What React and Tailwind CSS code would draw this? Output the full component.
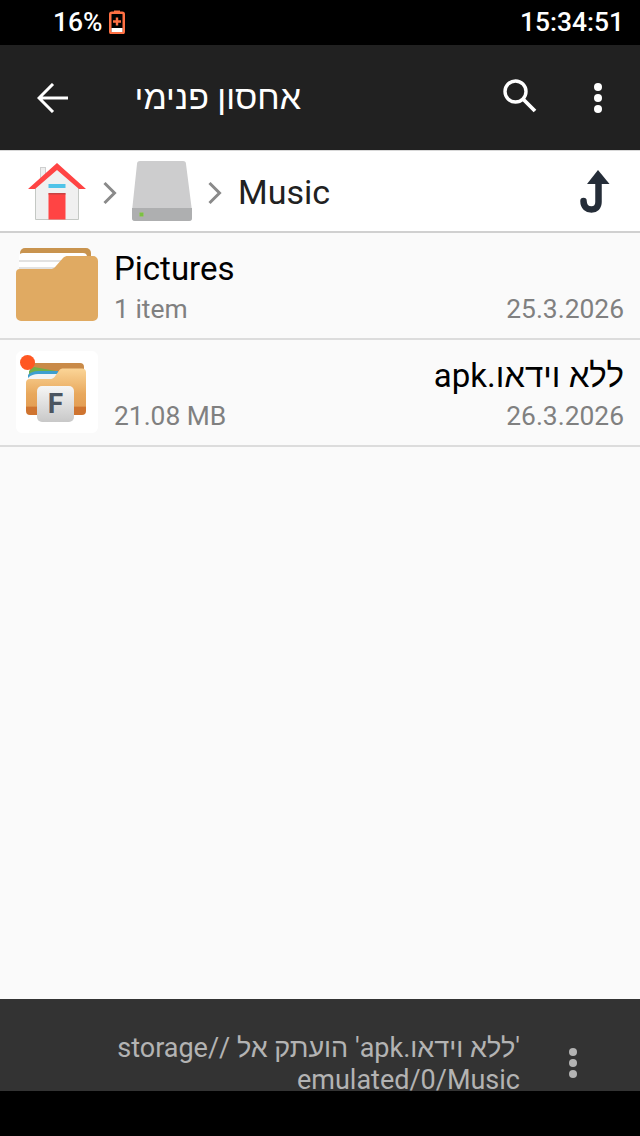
const font = { fontFamily: '"Roboto","Noto Sans",sans-serif' };

function Battery() {
  return (
    <svg width="16" height="24" viewBox="0 0 16 24" className="ml-[7px]">
      <rect x="5" y="0.5" width="6" height="3" fill="#ff7043" />
      <rect x="1.25" y="2.75" width="13.5" height="20.5" rx="1.5" fill="#000" stroke="#ff7043" strokeWidth="2.5" />
      <rect x="2.5" y="18" width="11" height="4" fill="#fff" />
      <path d="M6.8 7.5h2.4v2.8H12v2.4H9.2v2.8H6.8v-2.8H4v-2.4h2.8z" fill="#ff7043" />
    </svg>
  );
}

function Home() {
  return (
    <svg width="60" height="60" viewBox="0 0 60 60">
      <rect x="12.500" y="4.500" width="5" height="16" fill="#eeeeee" stroke="#cfcfcf" />
      <path d="M7.500 24 29 5 50.500 24v32.500H7.500z" fill="#f0f0f0" stroke="#c4c8c4" strokeWidth="1" />
      <path d="M0 26 29 0 58 26H51L29 7 7 26z" fill="#ff4444" />
      <rect x="20.500" y="21" width="17" height="4" fill="#4fc3e8" />
      <rect x="20.500" y="30.500" width="17" height="26" fill="#ff4444" />
      <rect x="20.500" y="30" width="17" height="1.500" fill="#c74343" />
    </svg>
  );
}

function Drive() {
  return (
    <svg width="60" height="60" viewBox="0 0 60 60">
      <path d="M8 0h43a3 3 0 0 1 3 3l6 47v7a3 3 0 0 1-3 3H3a3 3 0 0 1-3-3v-7L5 3a3 3 0 0 1 3-3z" fill="#cdcdce" />
      <path d="M0 47h60v10a3 3 0 0 1-3 3H3a3 3 0 0 1-3-3z" fill="#aeafb0" />
      <rect x="7.500" y="51.500" width="4" height="4" rx="1" fill="#7ac143" stroke="#9cbf75" />
    </svg>
  );
}

function Chevron() {
  return (
    <svg width="14" height="24" viewBox="0 0 14 24">
      <path d="M1.500 2 11.500 12 1.500 22" fill="none" stroke="#8a8a8a" strokeWidth="3" />
    </svg>
  );
}

function FolderIcon() {
  return (
    <svg width="82" height="74" viewBox="0 0 82 74">
      <path d="M9 0h61a5 5 0 0 1 5 5v20H4V5a5 5 0 0 1 5-5z" fill="#c9944f" />
      <rect x="3" y="5" width="68" height="24" rx="4" fill="#ffffff" />
      <rect x="3" y="12" width="68" height="2" fill="#e2e2e2" />
      <rect x="3" y="19" width="60" height="2" fill="#e2e2e2" />
      <path d="M4 21h30.500c2 0 3.200-.6 4.600-2L47 10c1.500-1.400 3-2 5-2h25a5 5 0 0 1 5 5V68a5 5 0 0 1-5 5H5a5 5 0 0 1-5-5V25a4 4 0 0 1 4-4z" fill="#e0aa62" />
    </svg>
  );
}

function AppIcon() {
  return (
    <div className="relative w-[82px] h-[82px] bg-white rounded-[6px] shrink-0">
      <svg width="82" height="82" viewBox="0 0 82 82" className="absolute left-0 top-0">
        <defs>
          <linearGradient id="fb" x1="0" y1="0" x2="0" y2="1">
            <stop offset="0" stopColor="#fbd597" />
            <stop offset="0.55" stopColor="#e8a85d" />
            <stop offset="0.81" stopColor="#e49f55" />
            <stop offset="0.83" stopColor="#cf7430" />
            <stop offset="1" stopColor="#cf7430" />
          </linearGradient>
          <linearGradient id="fc" x1="0" y1="0" x2="0" y2="1">
            <stop offset="0" stopColor="#f6f6f6" />
            <stop offset="1" stopColor="#c8c8c8" />
          </linearGradient>
        </defs>
        <path d="M15 15a3 3 0 0 1 3-3h46a4 4 0 0 1 4 4v10H12z" fill="#c98a48" />
        <path d="M13 20 18 16l22 4v8H13z" fill="#6fb04a" />
        <path d="M12 24c3-3 6-4 10-4h20v8H12z" fill="#3e9fd0" />
        <path d="M12 27c3-3 6-4 10-4h20v8H12z" fill="#f4f4f4" />
        <path d="M14 28h20c2 0 3-.5 4.500-2l5-7c1-1 2-1.500 3.500-1.500H66a4 4 0 0 1 4 4V60a4 4 0 0 1-4 4H14a4 4 0 0 1-4-4V32a4 4 0 0 1 4-4z" fill="url(#fb)" />
        <rect x="21" y="35" width="37" height="36" rx="5" fill="url(#fc)" />
        <text x="39.500" y="62" textAnchor="middle" fontSize="28" fontWeight="700" fill="#4c5560" fontFamily="Roboto">F</text>
      </svg>
      <div className="absolute left-[3.500px] top-[3.500px] w-[15px] h-[15px] rounded-full bg-[#ff5722]" />
    </div>
  );
}

function Row({ icon, title, sub, date, rtl }) {
  return (
    <div className="h-[107px] border-b-2 border-[#dcdcdc] pl-4 pr-4 flex items-start gap-4">
      <div className="w-[82px] h-[82px] mt-[11px] flex items-center justify-center shrink-0">{icon}</div>
      <div className="flex-1 min-w-0 flex flex-col mt-[17px]">
        <div
          dir={rtl ? 'rtl' : 'ltr'}
          className="text-[33px] leading-[38px] text-black"
        >
          {title}
        </div>
        <div className="flex justify-between text-[26.4px] leading-[28px] mt-[7px] text-[#808080]">
          <span>{sub}</span>
          <span>{date}</span>
        </div>
      </div>
    </div>
  );
}

function Dots({ r, gap, color }) {
  const s = r * 2;
  return (
    <svg width={s} height={gap * 2 + s} viewBox={`0 0 ${s} ${gap * 2 + s}`}>
      <circle cx={r} cy={r} r={r} fill={color} />
      <circle cx={r} cy={r + gap} r={r} fill={color} />
      <circle cx={r} cy={r + gap * 2} r={r} fill={color} />
    </svg>
  );
}

export default function App() {
  return (
    <div style={font} className="w-[640px] h-[1136px] flex flex-col bg-[#fafafa] overflow-hidden">
      <div className="h-[45px] bg-black flex items-center justify-between pl-[53px] pr-4 text-white text-[26.4px] font-medium shrink-0">
        <div className="flex items-center">
          <span>16%</span>
          <Battery />
        </div>
        <span>15:34:51</span>
      </div>

      <div className="h-[105px] bg-[#212121] flex items-center shrink-0">
        <div className="w-[106px] flex justify-center">
          <svg width="31" height="30" viewBox="0 0 31 30" className="-ml-[1px]">
            <path d="M31 15H3M16 1 2 15 16 29" fill="none" stroke="#fff" strokeWidth="3" />
          </svg>
        </div>
        <div dir="rtl" className="w-[195px] text-white text-[34px] leading-[40px] whitespace-nowrap -mt-[1px]">
          אחסון פנימי
        </div>
        <div className="w-[201px]" />
        <svg width="36" height="36" viewBox="0 0 36 36" className="-mt-[3px]">
          <circle cx="13.500" cy="13.500" r="10.500" fill="none" stroke="#fff" strokeWidth="3.400" />
          <path d="M21 21 33 33" stroke="#fff" strokeWidth="3.800" />
        </svg>
        <div className="ml-[56px]">
          <Dots r={4} gap={11} color="#fff" />
        </div>
      </div>

      <div className="h-[83px] bg-white border-t border-t-[#d8d8d8] border-b-2 border-b-[#d0d0d0] flex items-center pl-7 pr-[30px] shrink-0">
        <div className="mt-[4px]"><Home /></div>
        <div className="ml-[15px] mt-[3px]"><Chevron /></div>
        <div className="ml-[15px]"><Drive /></div>
        <div className="ml-[16px] mt-[3px]"><Chevron /></div>
        <span className="ml-[16px] mt-[2px] text-[34px] text-[#212121] leading-[40px]">Music</span>
        <div className="flex-1" />
        <svg width="30" height="43" viewBox="0 0 30 43">
          <path d="M18 0 29.500 14H7z" fill="#252d38" />
          <path d="M18.500 12V32c0 5-3 7.500-7 7.500S3.500 37 3.500 31" fill="none" stroke="#252d38" strokeWidth="6.500" strokeLinecap="round" />
        </svg>
      </div>

      <Row icon={<FolderIcon />} title="Pictures" sub="1 item" date="25.3.2026" />
      <Row icon={<AppIcon />} title="ללא וידאו.apk" sub="21.08 MB" date="26.3.2026" rtl />

      <div className="flex-1" />

      <div className="h-[92px] bg-[#333333] flex items-start shrink-0 overflow-hidden">
        <div dir="rtl" className="w-[520px] pl-4 pt-[33px] text-[27px] leading-[32px] text-[#b3b3b3] whitespace-nowrap">
          <div>'ללא וידאו.apk' הועתק אל //storage</div>
          <div dir="ltr" className="text-right h-[28px] overflow-visible">emulated/0/Music</div>
        </div>
        <div className="ml-[49px] mt-[49px]">
          <Dots r={4} gap={11} color="#b3b3b3" />
        </div>
      </div>

      <div className="h-[45px] bg-black shrink-0" />
    </div>
  );
}
